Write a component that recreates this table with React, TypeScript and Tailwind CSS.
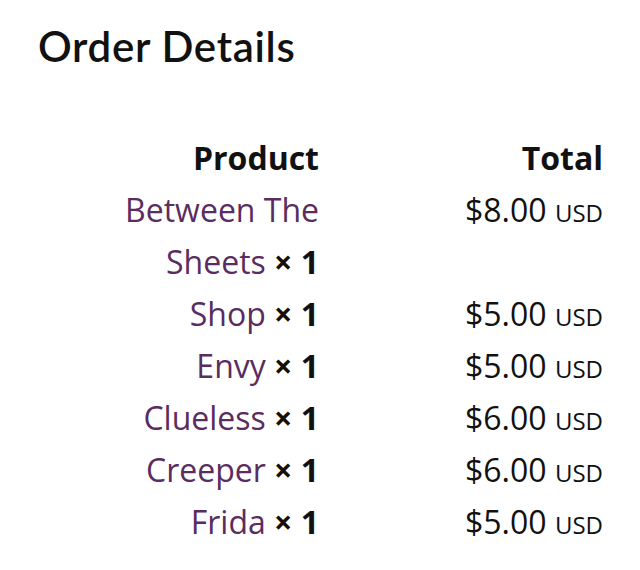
import React from "react";

const rows: { name: string; price: string }[] = [
  { name: "Between The Sheets", price: "$8.00" },
  { name: "Shop", price: "$5.00" },
  { name: "Envy", price: "$5.00" },
  { name: "Clueless", price: "$6.00" },
  { name: "Creeper", price: "$6.00" },
  { name: "Frida", price: "$5.00" },
];

export default function App() {
  return (
    <div className="w-[640px] h-[570px] bg-white px-[38px] pt-[22px]">
      <h2 className="font-['Lato',sans-serif] font-semibold text-[42px] leading-[48px] text-[#111] tracking-[0.7px]">
        Order Details
      </h2>
      <table className="mt-[62px] w-[565px] font-['Open_Sans',sans-serif] text-[32px] leading-[52px]">
        <thead>
          <tr>
            <th className="w-[281px] p-0 text-right font-bold text-[#111]">Product</th>
            <th className="p-0 text-right font-bold text-[#111]">Total</th>
          </tr>
        </thead>
        <tbody>
          {rows.map((r) => (
            <tr key={r.name}>
              <td className="p-0 text-right align-top text-[#5a2c60]">
                {r.name} <strong className="text-[#111] font-bold">× 1</strong>
              </td>
              <td className="p-0 text-right align-top text-[#111]">
                {r.price} <span className="text-[24px] leading-none">USD</span>
              </td>
            </tr>
          ))}
        </tbody>
      </table>
    </div>
  );
}
